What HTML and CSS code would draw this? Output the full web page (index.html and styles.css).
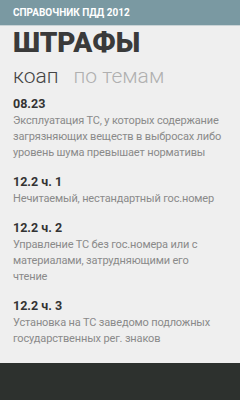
FILE: index.html
```html
<!DOCTYPE html>
<html lang="ru">
<head>
<meta charset="utf-8">
<link rel="stylesheet" href="styles.css">
</head>
<body>
<div class="screen">
  <header class="topbar">СПРАВОЧНИК ПДД 2012</header>
  <main class="content">
    <h1 class="title">ШТРАФЫ</h1>
    <nav class="pivot">
      <span class="pivot-item active">коап</span>
      <span class="pivot-item">по темам</span>
    </nav>
    <ul class="list">
      <li class="item">
        <div class="code">08.23</div>
        <div class="desc">Эксплуатация ТС, у которых содержание загрязняющих веществ в выбросах либо уровень шума превышает нормативы</div>
      </li>
      <li class="item">
        <div class="code">12.2 ч. 1</div>
        <div class="desc">Нечитаемый, нестандартный гос.номер</div>
      </li>
      <li class="item">
        <div class="code">12.2 ч. 2</div>
        <div class="desc">Управление ТС без гос.номера или с материалами, затрудняющими его<br>чтение</div>
      </li>
      <li class="item">
        <div class="code">12.2 ч. 3</div>
        <div class="desc">Установка на ТС заведомо подложных государственных рег. знаков</div>
      </li>
    </ul>
  </main>
  <footer class="appbar"></footer>
</div>
</body>
</html>
```
FILE: styles.css
```css
* { box-sizing: border-box; }
html, body { margin: 0; padding: 0; }
body { font-family: Roboto, "Open Sans", sans-serif; background: #efefef; }
.screen { width: 240px; height: 400px; display: flex; flex-direction: column; overflow: hidden; }
.topbar {
  height: 26px;
  background: #7a99a2;
  border-bottom: 1px solid #c9d3d6;
  color: #fff;
  font-weight: 700;
  font-size: 10px;
  padding-left: 13px;
  display: flex;
  align-items: center;
  flex-shrink: 0;
}
.content { flex: 1; padding: 0 13px; overflow: hidden; }
.title {
  margin: 1px 0 0;
  font-size: 28px;
  line-height: 32px;
  font-weight: 900;
  color: #3a3a3a;
}
.pivot { display: flex; gap: 15px; margin-top: 3px; font-size: 21px; line-height: 28px; font-weight: 300; color: #b0b0b0; }
.pivot-item.active { color: #444; }
.list { list-style: none; margin: 6px 0 0; padding: 0; }
.item { margin-bottom: 13px; }
.code { font-size: 12.5px; line-height: 16px; font-weight: 700; color: #333; }
.desc { font-size: 11px; line-height: 16px; letter-spacing: -0.15px; color: #8a8a8a; margin-top: 1px; }
.appbar { height: 37px; background: #2d312e; flex-shrink: 0; }
```
